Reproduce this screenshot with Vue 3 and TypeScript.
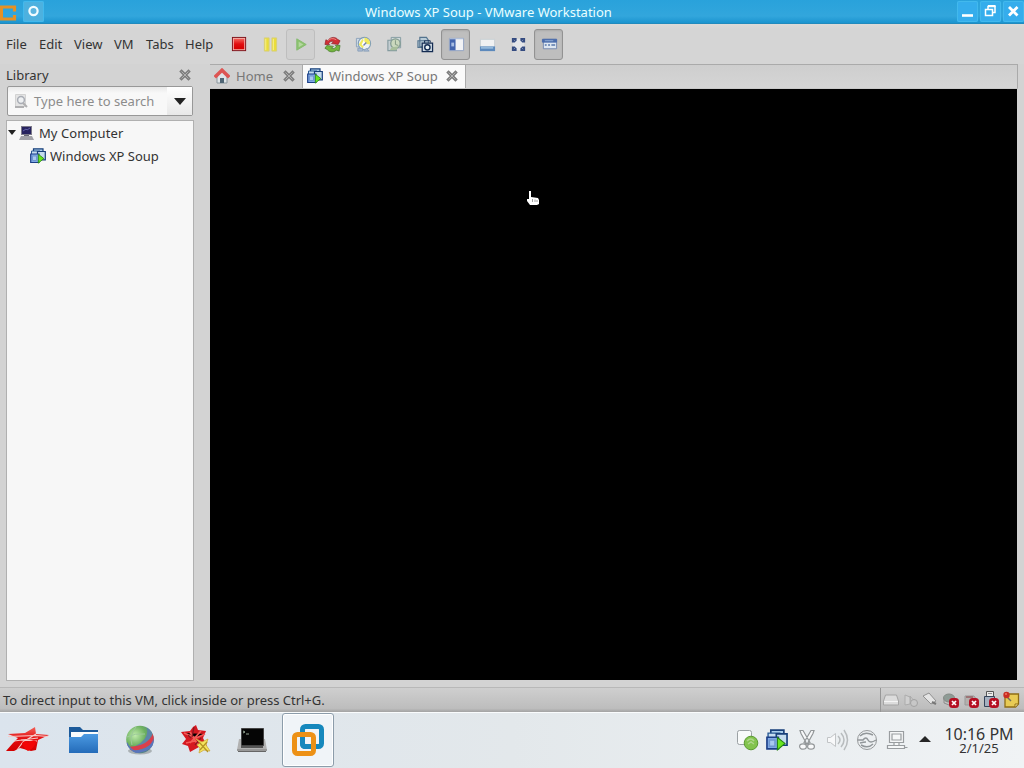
<script setup lang="ts">
const menus: { label: string; width: number }[] = [
  { label: 'File', width: 33 },
  { label: 'Edit', width: 35 },
  { label: 'View', width: 40 },
  { label: 'VM', width: 32 },
  { label: 'Tabs', width: 39 },
  { label: 'Help', width: 39 },
]
</script>

<template>
  <div class="desktop">
    <svg class="defs" width="0" height="0">
      <defs>
        <symbol id="vm" viewBox="0 0 16 16">
          <path d="M3.500.8h9.500v6H3.500z" fill="#a9cdea" stroke="#173f7a" stroke-width="1.200" />
          <path d="M1.500 3h8.500v4H1.500z" fill="#c5ddf0" stroke="#2a5a94" />
          <path d="M7.500 3.500h7.800v8.300H7.500z" fill="#c4dcee" stroke="#173f7a" stroke-width="1.200" />
          <path d="M.700 6h8.300v8.500H.700z" fill="#7fa9e6" stroke="#1c3f88" stroke-width="1.200" />
          <path d="M2.500 8h4v4.500h-4z" fill="#a8c9ef" stroke="#6f96cf" />
          <path d="M8.300 6.200l5.500 4.300-5.500 4.700z" fill="#68e61e" stroke="#268414" stroke-width=".8" />
        </symbol>
        <symbol id="cross" viewBox="0 0 12 12">
          <path d="M2.500 2.500l7 7M9.500 2.500l-7 7" stroke="#7c7c7c" stroke-width="3.200" stroke-linecap="square" />
          <path d="M2.500 2.500l7 7M9.500 2.500l-7 7" stroke="#b4b4b4" stroke-width=".9" />
        </symbol>
        <symbol id="off" viewBox="0 0 10 10">
          <rect width="10" height="10" rx="3.500" fill="#b50f22" />
          <path d="M3 3l4 4M7 3L3 7" stroke="#fff" stroke-width="1.700" />
        </symbol>
        <radialGradient id="ball" cx=".32" cy=".35" r=".75">
          <stop offset="0" stop-color="#c0ebac" /><stop offset=".5" stop-color="#6db15f" /><stop offset="1" stop-color="#4d7a8e" />
        </radialGradient>
        <clipPath id="disc"><circle cx="16" cy="15.500" r="13.800" /></clipPath>
        <linearGradient id="folder" x2="0" y2="1">
          <stop offset="0" stop-color="#4b9ae2" /><stop offset="1" stop-color="#246bb9" />
        </linearGradient>
        <linearGradient id="red" x2="0" y2="1">
          <stop offset="0" stop-color="#f26158" /><stop offset=".5" stop-color="#e20d10" /><stop offset="1" stop-color="#d40000" />
        </linearGradient>
      </defs>
    </svg>

    <header class="titlebar">
      <svg class="app-logo" width="18" height="24" viewBox="0 0 18 24">
        <path d="M0 7h14.500v4.500M0 19h14.500v-4" fill="none" stroke="#e69124" stroke-width="3.200" />
        <path d="M1.500 6v14" stroke="#e69124" stroke-width="3" />
      </svg>
      <span class="win-button sticky"><svg width="20" height="20" viewBox="0 0 20 20"><circle cx="10.500" cy="10" r="4.100" fill="#5db5df" stroke="#f2fcff" stroke-width="2.200" /></svg></span>
      <h1>Windows XP Soup - VMware Workstation</h1>
      <div class="win-buttons">
        <span class="win-button"><svg width="20" height="20" viewBox="0 0 20 20"><path d="M5 14.500h11" stroke="#fff" stroke-width="2.600" /></svg></span>
        <span class="win-button"><svg width="20" height="20" viewBox="0 0 20 20"><path d="M8 8V5.500h7v6h-2M5.500 8.500h7v6h-7z" fill="none" stroke="#fff" stroke-width="1.500" /><path d="M8 5h7.500" stroke="#fff" stroke-width="2" /></svg></span>
        <span class="win-button last"><svg width="20" height="20" viewBox="0 0 20 20"><path d="M6 6l8.500 8.500M14.500 6L6 14.500" stroke="#fff" stroke-width="2.800" /></svg></span>
      </div>
    </header>

    <div class="menubar">
      <nav class="menus">
        <span v-for="m in menus" :key="m.label" :style="{ width: m.width + 'px' }">{{ m.label }}</span>
      </nav>
      <div class="tools">
        <span class="tool"><svg viewBox="0 0 18 18"><rect x="1.500" y="1.500" width="14" height="14" fill="#f5b0aa" stroke="#7d1118" /><rect x="3" y="3" width="11" height="11" fill="url(#red)" /></svg></span>
        <span class="tool"><svg viewBox="0 0 18 18"><path d="M2.500 2h5v14h-5zM10.500 2h5v14h-5z" fill="#eadd3a" stroke="#d8cf78" /><path d="M4 3v12M12 3v12" stroke="#f6ef93" /></svg></span>
        <span class="tool boxed"><svg viewBox="0 0 18 18"><path d="M4 3l10 6-10 6z" fill="#8cc26f" stroke="#86bb70" /><path d="M6 6l5 3-5 3z" fill="#b4d8a0" /></svg></span>
        <span class="tool"><svg viewBox="0 0 18 18"><path d="M1 9l1-5 2 1c3-5 9-4 11-1l2 1-2 4-7-1 2-2c-2-1-4 0-5 2l1 1z" fill="#d02f35" stroke="#8c2028" stroke-width=".7" /><path d="M4 5q4-4 9-1" fill="none" stroke="#ed8a84" /><path d="M17 10l-1 6-3-1c-3 3-8 2-10-1l-2-1 2-3 7 1-2 2c2 1 4 0 5-2l-1-1z" fill="#73b53e" stroke="#3f7425" stroke-width=".7" /></svg></span>
        <span class="tool"><svg viewBox="0 0 18 18"><path d="M1.500 2.500h9v9h-9z" fill="#cfdbe6" stroke="#8ba1ba" /><circle cx="10" cy="8" r="6.500" fill="#eef2f4" stroke="#7f9db6" stroke-width="1.200" /><path d="M10 8V1.500A6.500 6.500 0 0 1 16 9z" fill="#f0ea5d" /><path d="M8 3L4 9l4 4 3-4z" fill="#f0ea5d" /><path d="M9 5l-2 4 3 3 2-4z" fill="#fff" /><path d="M12 7l-3 3" stroke="#7383a9" stroke-width="1.500" /><path d="M3 13h5v3H3zM12 13l3 3H9z" fill="#a9b9d1" stroke="#8ba1ba" /></svg></span>
        <span class="tool"><svg viewBox="0 0 18 18"><path d="M5.500 1.500h10v11h-10z" fill="#d2dbdc" stroke="#849ba0" /><path d="M2 4.500h9v11H2z" fill="#c4ced2" stroke="#849ba0" stroke-width="1.200" /><circle cx="10" cy="8" r="5" fill="#cad8bd" stroke="#809990" stroke-width="1.300" /><path d="M10 4.500V9l3 1" fill="none" stroke="#819781" /><path d="M6 12l7-1-2 4H4z" fill="#a8bf9b" /></svg></span>
        <span class="tool"><svg viewBox="0 0 18 18"><path d="M3 1.500h7l2 3v7H3zM1 5h7v7H1z" fill="#b9cbd7" stroke="#53738e" stroke-width="1.200" /><path d="M5.500 7.500h11v9h-11z" fill="#cbd7e2" stroke="#142c52" stroke-width="1.300" /><circle cx="11" cy="12" r="2.800" fill="#e9f2f6" stroke="#142c52" stroke-width="1.500" /><path d="M8 7V5h6v2" fill="none" stroke="#142c52" /></svg></span>
        <span class="tool pressed"><svg viewBox="0 0 18 18"><path d="M1.500 2.500h15v13h-15z" fill="#f1f2f5" stroke="#91a1c2" /><path d="M2 3h6v12H2z" fill="#4364ad" /><path d="M5 7v4" stroke="#a7bde2" stroke-width="3" /><path d="M2 3h14" stroke="#bac9df" /></svg></span>
        <span class="tool"><svg viewBox="0 0 18 18"><path d="M1.500 3.500h15v12h-15z" fill="#f0f1f2" stroke="#c8cfd3" /><path d="M1 11h16v5H1z" fill="#5c89bc" /><path d="M2 12.500h13" stroke="#94b9db" stroke-width="2" /></svg></span>
        <span class="tool"><svg viewBox="0 0 18 18"><rect x="3" y="3" width="12" height="12" fill="#e3e5e8" /><path d="M2 2h5v3L5 7H2zM11 2h5v5h-3l-2-2zM2 11h3l2 2v3H2zM16 11v5h-5v-3l2-2z" fill="#344b80" /><path d="M6 6l-2-2M12 6l2-2M6 12l-2 2M12 12l2 2" stroke="#7f91b4" /></svg></span>
        <span class="tool pressed"><svg viewBox="0 0 18 18"><path d="M2.500 3.500h14v10h-14z" fill="#dee7f1" stroke="#7589b0" /><path d="M1.500 3.500h15v3h-15z" fill="#4b6cab" stroke="#4b6cab" /><path d="M4 9.500h2M7.500 9.500h2M11 9.500h4" stroke="#7893bd" stroke-width="2" /><path d="M4 5h9" stroke="#91add7" /></svg></span>
      </div>
    </div>

    <main class="workspace">
      <aside class="library">
        <div class="library-title"><span>Library</span><svg width="12" height="12"><use href="#cross" /></svg></div>
        <div class="search">
          <svg width="16" height="16" viewBox="0 0 16 16"><path d="M2.500 1.500h10v12h-10z" fill="#e4e4e4" stroke="#d2d2d2" /><circle cx="8" cy="7" r="3.400" fill="#eef0f2" stroke="#a9adb5" stroke-width="1.500" /><path d="M10 10l4 4M2 14h9" stroke="#b0b0b2" stroke-width="2" /></svg>
          <span class="placeholder">Type here to search</span>
          <span class="drop"><svg width="12" height="7"><path d="M0 0h12L6 7z" fill="#222" /></svg></span>
        </div>
        <div class="tree">
          <div class="row root">
            <svg class="arrow" width="8" height="6"><path d="M0 0h8L4 5z" fill="#222" /></svg>
            <svg class="pc" width="15" height="16" viewBox="0 0 15 16"><path d="M2 1h11v9H2z" fill="#7c7a89" /><path d="M3 2h9v7H3z" fill="#27235f" /><path d="M4 6l3-2 1 1 3-2" stroke="#6262a9" fill="none" /><path d="M5 10h5v2H5z" fill="#686875" /><path d="M2 11h11l2 4H0z" fill="#a2a2a8" /></svg>
            <span>My Computer</span>
          </div>
          <div class="row child"><svg width="16" height="16"><use href="#vm" /></svg><span>Windows XP Soup</span></div>
        </div>
      </aside>
      <section class="console">
        <div class="tabs">
          <div class="tab home">
            <svg width="16" height="16" viewBox="0 0 16 16"><path d="M3 8l5-5 5 5v7H3z" fill="#dfe5e8" stroke="#8b979e" /><path d="M6 10h4v5H6z" fill="#4f6675" /><path d="M.8 9.300L8 2.300l7.200 7" fill="none" stroke="#dd5553" stroke-width="3.600" /></svg>
            <span>Home</span><svg class="close" width="12" height="12"><use href="#cross" /></svg>
          </div>
          <div class="tab active">
            <svg width="16" height="16"><use href="#vm" /></svg>
            <span>Windows XP Soup</span><svg class="close" width="12" height="12"><use href="#cross" /></svg>
          </div>
        </div>
        <div class="screen">
          <svg class="pointer" width="14" height="17" viewBox="0 0 14 17"><path d="M3 1h2v6l7 1 1 2v4l-2 1H4l-3-4V9h2z" fill="#fff" /><path d="M6.500 9v3M9 9.500V12M11 10v2" stroke="#777" stroke-width=".7" /></svg>
        </div>
      </section>
    </main>

    <footer class="statusbar">
      <span class="hint">To direct input to this VM, click inside or press Ctrl+G.</span>
      <div class="devices">
        <svg viewBox="0 0 18 18"><path d="M3.500 4h11l2 6v4h-15v-4z" fill="#dcdcdc" stroke="#a4a4a4" /><path d="M2 10.500h14" stroke="#f4f4f4" /></svg>
        <svg viewBox="0 0 18 18"><path d="M3 4l5 2v7l-5 1zM8 5l5 6-3 4z" fill="#d0d0d0" stroke="#acacac" /><circle cx="12" cy="12" r="3.500" fill="#c7c7c7" stroke="#a2a2a2" /></svg>
        <svg viewBox="0 0 18 18"><path d="M1 5l6-3 7 8-5 3z" fill="#e4e4e4" stroke="#909090" /><path d="M10 11l4 2" stroke="#777" stroke-width="2" /></svg>
        <svg viewBox="0 0 18 18"><ellipse cx="7" cy="7" rx="5.500" ry="4" fill="#8e9b95" stroke="#848b86" /><path d="M2 7v5l5 2" fill="none" stroke="#8c8c8c" /><use href="#off" x="7" y="7" width="10" height="10" /></svg>
        <svg viewBox="0 0 18 18"><path d="M3 5h9l3 4v5H3z" fill="#b4b0ad" stroke="#999" /><path d="M4 6h7" stroke="#9d7476" stroke-width="2" /><use href="#off" x="7" y="7" width="10" height="10" /></svg>
        <svg viewBox="0 0 18 18"><path d="M4.500.500h7v5h-7z" fill="#ececec" stroke="#555" /><path d="M2.500 5.500h10v10h-10z" fill="#a5b0bf" stroke="#35445a" /><path d="M7 2v1M9 2v1" stroke="#333" /><use href="#off" x="7" y="7" width="10" height="10" /></svg>
      </div>
      <svg class="note" viewBox="0 0 18 18" width="18" height="18"><path d="M3 3h13.500v10l-3 3H3z" fill="#e8cb55" stroke="#8e6d16" stroke-width="1.300" /><path d="M13 16v-3h3" fill="#fff2a0" stroke="#8e6d16" /><path d="M5 6l4 4" stroke="#6d6d5d" stroke-width="1.500" /><circle cx="4.500" cy="4" r="3.200" fill="#c92e24" /><circle cx="4" cy="3" r="1" fill="#f37a62" /></svg>
    </footer>

    <div class="taskbar">
      <div class="launchers">
        <span class="launcher"><svg width="46" height="30" viewBox="0 0 46 30"><path d="M3 9l17-1 10-6 1 7 13 1-11 5-2 10-5 1-11-3-6 3H1l7-8 5-5z" fill="url(#red)" /><path d="M3 11.500l28-1 12 1M9 16l24-3M12 25l6-8 13-8M16 15l16 1" fill="none" stroke="#f7ccc9" stroke-width="1.100" /><path d="M17 18q4-4 6 0 5-4 8-2-1 7-8 10-5-3-6-8z" fill="#f30505" /></svg></span>
        <span class="launcher folder"><svg width="32" height="30" viewBox="0 0 32 30"><path d="M1 2h11l3 3h15v9H1z" fill="#1c5a9a" /><path d="M3 7h27v8H3z" fill="#fafcfd" /><path d="M1 12h12l3-3h14v19H1z" fill="url(#folder)" /></svg></span>
        <span class="launcher globe"><svg width="32" height="32" viewBox="0 0 32 32"><ellipse cx="16" cy="27" rx="12" ry="3.500" fill="#aab1b4" /><circle cx="16" cy="15.500" r="13.800" fill="url(#ball)" /><g clip-path="url(#disc)" fill="none"><path d="M25 2q4 14-12 22" stroke="#5d86a8" stroke-width="5" /><path d="M31 10Q26 24 6 25" stroke="#d93f4c" stroke-width="4.500" /><path d="M31 15Q27 28 8 28" stroke="#5a74bd" stroke-width="3" /><path d="M2 19q3 7 10 10" stroke="#5a74bd" stroke-width="3" /><path d="M12 3q-7 8-4 18M3 13q8-4 18-3" stroke="#9cc99a" /></g></svg></span>
        <span class="launcher star"><svg width="34" height="34" viewBox="0 0 34 34"><path d="M2 9l9-1 3-4 3-2 2 5 8 1-3 7 4 8-8 1-9 5-2-6-6-2 4-5z" fill="#d51820" /><path d="M11 9l8 13M22 8L11 20M5 10l12 5 9-4M7 20l9-2" stroke="#f45b57" stroke-width="1.700" /><path d="M15 4l-2 10M22 15l-6 7M9 12l3 3" stroke="#8c1821" stroke-width="1.300" /><path d="M17 16l6 3 6-3-2 6 4 6-6-1-5 3 1-5-3-3 3-2z" fill="#f5e55f" stroke="#cfab3f" stroke-width=".8" /><path d="M20 19l9 10M28 19l-7 8" stroke="#b29326" stroke-width="1.200" /></svg></span>
        <span class="launcher terminal"><svg width="32" height="28" viewBox="0 0 32 28"><path d="M3 13h26l2 11H1z" fill="#b1b1b1" /><path d="M5.500 2.500h22v17h-22z" fill="#050505" stroke="#444" /><path d="M7 5l2 1-2 1M10 8h3" fill="none" stroke="#a6b9a6" stroke-width=".9" /><path d="M5 20h22v2H5z" fill="#555" /><path d="M1 23h30v2H1z" fill="#989898" /><path d="M2 25.500h28" stroke="#666" /></svg></span>
        <span class="launcher vmware"><svg width="34" height="34" viewBox="0 0 34 34"><rect x="11.500" y="3.500" width="19" height="20" rx="3" fill="none" stroke="#1688bd" stroke-width="5" /><rect x="3.500" y="11.500" width="19" height="19" rx="3" fill="none" stroke="#ed9116" stroke-width="5" /><path d="M11.500 14v6.500q0 3 3 3h5" fill="none" stroke="#1688bd" stroke-width="5" /></svg></span>
      </div>
      <div class="tray">
        <svg width="24" height="24" viewBox="0 0 24 24"><rect x="2.500" y="2.500" width="14" height="14" rx="2" fill="#f8fafa" stroke="#9ba1a4" /><circle cx="16" cy="15" r="6.800" fill="#82c34d" stroke="#5a9a31" /><path d="M12 13q4-4 7 0M13 16l3-2 3 2" fill="none" stroke="#aed68b" stroke-width="1.500" /></svg>
        <svg width="24" height="24" viewBox="0 0 24 24"><use href="#vm" x="1" y="1" width="22" height="22" /></svg>
        <svg width="24" height="24" viewBox="0 0 24 24"><g fill="#f8f9fa" stroke="#929698" stroke-width="1.200"><path d="M5 2.500h3l7 12-3 2-6-11zM19 2.500h-3l-7 12 3 2 6-11z" /><ellipse cx="8" cy="18.500" rx="3.400" ry="2.700" /><ellipse cx="16" cy="18.500" rx="3.400" ry="2.700" /></g></svg>
        <svg width="24" height="24" viewBox="0 0 24 24"><path d="M2.500 9.500h3l5-4v13l-5-4h-3z" fill="#f8f9fa" stroke="#c1c4c6" /><path d="M13 8q4 4 0 8M16 5q6 7 0 14M19 2q7 10 0 20" fill="none" stroke="#b8bcbe" stroke-width="1.500" /></svg>
        <svg width="24" height="24" viewBox="0 0 24 24"><circle cx="12" cy="12" r="9.500" fill="#edf0f2" stroke="#96999b" /><path d="M5 8q5-5 13-1M18 16q-5 5-12 1M3 12h5q3-4 5 0t8 0M5 15q4-1 6-1" fill="none" stroke="#92979a" stroke-width="1.500" /></svg>
        <svg width="24" height="24" viewBox="0 0 24 24"><g fill="#f5f7f8" stroke="#999da0" stroke-width="1.200"><path d="M4.500 3.500h14v11h-14zM7 6h9v6H7zM9 14.500h5v3H9zM2.500 17.500h17v3h-17zM19.500 19.500h3" /></g></svg>
        <svg class="up" width="12" height="6"><path d="M0 6l6-6 6 6z" fill="#262626" /></svg>
        <time class="clock"><span>10:16 PM</span><small>2/1/25</small></time>
      </div>
    </div>
  </div>
</template>

<style>
body { margin: 0; overflow: hidden; }
</style>

<style scoped>
* { box-sizing: border-box; }
.desktop { position: relative; width: 1024px; height: 768px; display: flex; flex-direction: column; background: #d3d3d3; color: #333; font: 13px "Noto Sans", sans-serif; white-space: nowrap; overflow: hidden; }
.desktop svg { display: block; flex: none; }
.desktop .defs { position: absolute; }
.titlebar { height: 24px; flex: none; display: flex; align-items: center; background: linear-gradient(#29a2db, #32a6dc 70%, #1b94cf); border-bottom: 1px solid #218abd; }
.titlebar h1 { margin: 0 0 0 321px; font: 13px/24px "Noto Sans", sans-serif; color: #eaffff; }
.win-button { width: 21px; height: 21px; background: #35adec; box-shadow: inset 0 0 0 1px #42b9ed; border-radius: 2px; }
.sticky { margin-left: 5px; background: #4db1df; }
.win-buttons { margin-left: auto; display: flex; gap: 2px; }
.menubar { height: 40px; flex: none; display: flex; align-items: center; background: linear-gradient(#dcdad8 0, #d5d5d5 5px); padding-left: 6px; }
.menus { width: 218px; display: flex; }
.menus span { display: block; }
.tools { display: flex; gap: 2px; }
.tool { width: 29px; height: 31px; display: flex; align-items: center; justify-content: center; border: 1px solid transparent; border-radius: 3px; }
.tool svg { width: 17px; height: 17px; margin-left: 1px; }
.boxed { border-color: #bebebe; background: #d0d0d0; }
.pressed { background: #bebebe; border-color: #929292; box-shadow: inset 0 1px 2px #aaa; }
.workspace { height: 623px; display: flex; flex: none; }
.library { width: 210px; padding: 1px 16px 6px 6px; display: flex; flex-direction: column; }
.library-title { height: 20px; margin-bottom: 1px; display: flex; align-items: center; justify-content: space-between; padding-right: 3px; }
.search { height: 30px; margin: 0 1px 4px; border: 1px solid #989898; border-radius: 2px; background: linear-gradient(#e9e9e9, #f8f8f8 6px); display: flex; align-items: center; padding-left: 5px; }
.placeholder { color: #8c8c8c; margin-left: 5px; letter-spacing: .04px; }
.drop { margin-left: auto; width: 25px; height: 28px; background: linear-gradient(#fff, #e8e8e8); display: flex; align-items: center; justify-content: center; }
.tree { flex: 1; background: #f7f7f7; border: 1px solid #b0b0b0; }
.row { display: flex; height: 23px; align-items: center; }
.root { padding-left: 1px; }
.root .pc { margin-left: 3px; margin-right: 5px; }
.root span { letter-spacing: .08px; }
.child { padding-left: 23px; }
.child span { margin-left: 4px; }
.console { width: 808px; height: 616px; }
.tabs { height: 25px; display: flex; border-top: 1px solid #aaa; border-right: 1px solid #aaa; border-bottom: 1px solid #c8c8c8; background: linear-gradient(#cecece, #d5d5d5); }
.tab { display: flex; align-items: center; padding: 0 0 1px 4px; color: #777; border-right: 1px solid #aaa; }
.home { width: 93px; background: #d0d0d0; }
.home span { margin-left: 6px; }
.close { margin-left: auto; margin-right: 7px; }
.active { width: 163px; background: #fafafa; color: #777; }
.active span { margin-left: 6px; }
.screen { height: 591px; background: #000; margin-right: 1px; position: relative; }
.pointer { position: absolute; left: 316px; top: 101px; }
.statusbar { height: 25px; flex: none; display: flex; align-items: center; padding-left: 3px; border-top: 1px solid #b8b8b8; background: linear-gradient(#cfcfcf, #bdbdbd 85%, #a3a3a3); }
.hint { letter-spacing: -.03px; }
.devices { margin-left: auto; display: flex; border-left: 1px solid #969696; height: 24px; align-items: center; padding: 0 0 0 1px; }
.devices svg { width: 18px; height: 18px; margin-right: 2px; }
.note { margin-right: 4px; }
.taskbar { height: 56px; flex: none; display: flex; background: linear-gradient(90deg, #dbe4ed, #e3e8eb 50%, #f0f3f5); border-top: 1px solid #fafcfd; }
.launchers { display: flex; height: 54px; align-items: center; }
.launcher { width: 56px; height: 54px; display: flex; align-items: center; justify-content: center; }
.vmware { width: 52px; margin-left: 2px; border: 1px solid #8c9caa; border-radius: 3px; background: #f0f4f8; box-shadow: inset 0 0 0 1px #fff; }
.tray { margin-left: auto; height: 54px; display: flex; align-items: center; gap: 6px; padding-right: 10px; }
.up { margin-left: 4px; margin-top: -2px; }
.clock { margin-left: 7px; width: 70px; display: flex; flex-direction: column; align-items: center; color: #333; }
.clock span { font-size: 16px; line-height: 16px; }
.clock small { font-size: 13px; line-height: 13px; }
</style>
